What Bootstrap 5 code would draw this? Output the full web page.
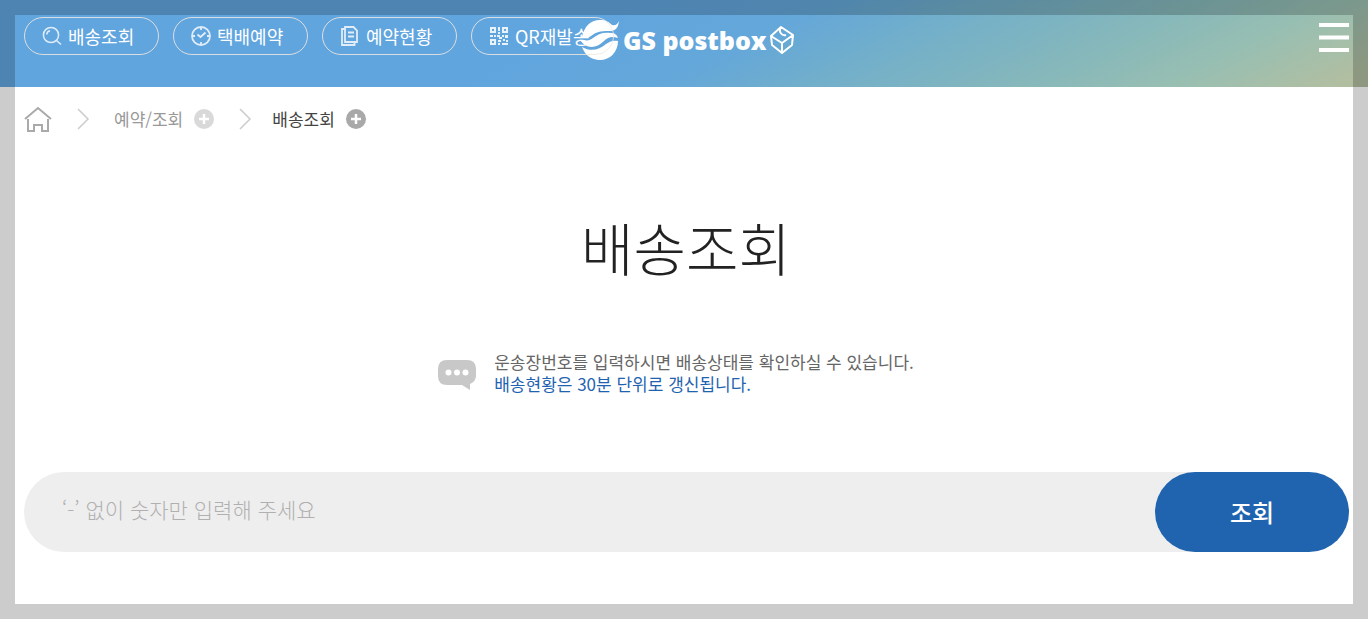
<!DOCTYPE html>
<html lang="ko">
<head>
<meta charset="utf-8">
<meta name="viewport" content="width=device-width, initial-scale=1">
<title>배송조회 - GS postbox</title>
<link href="https://cdn.jsdelivr.net/npm/bootstrap@5.3.0/dist/css/bootstrap.min.css" rel="stylesheet">
<style>
  body { font-family: "Noto Sans CJK KR", sans-serif; color: #222; background: #fff; }
  a { color: inherit; text-decoration: none; }
  .page-frame { border: 15px solid rgba(0, 0, 0, .2); pointer-events: none; z-index: 1050; }
  .site-header {
    padding: 17px 19px 32px 24px;
    background: linear-gradient(153deg, #61a5df 0%, #61a5df 40%, #64a7d9 54%, #72afca 64%, #87b8ba 78%, #9abfb1 88%, #b2bea0 98%);
  }
  .quick-menu { gap: 14px; z-index: 1; }
  .quick-link {
    height: 38px; min-width: 135px; padding: 0 17px; gap: 6px;
    border: 1px solid rgba(240, 232, 225, .85); border-radius: 19px;
    color: #fff; font-size: 18px; line-height: 36px; white-space: nowrap;
  }
  .quick-link-wide { min-width: 143px; }
  .brand { top: 19px; left: calc(50% - 104px); gap: 3px; color: #fff; }
  .brand-name { font-family: "Open Sans", sans-serif; font-weight: 800; font-size: 25px; line-height: 40px; white-space: nowrap; }
  .menu-toggle { width: 30px; padding: 0; margin-top: 6px; }
  .crumbs { padding: 0 24px; height: 64px; color: #999; font-size: 17px; }
  .crumbs .now { color: #444; margin-left: 20px; }
  .crumbs button { line-height: 0; margin-left: 11px; }
  .page-title { margin: 55px 0 0; padding-left: 4px; font-size: 57px; font-weight: 300; line-height: 80px; }
  .notice { margin-top: 65px; padding-right: 16px; gap: 18px; font-size: 17px; line-height: 22px; color: #666; }
  .notice svg { margin-top: 4px; }
  .accent { color: #1f63b0; }
  .track-form { margin: 77px 19px 67px 24px; height: 80px; border-radius: 40px; background: #eee; }
  .track-input { min-width: 0; padding: 0 38px 4px; font-size: 21px; font-weight: 300; color: #333; outline: 0; }
  .track-input::placeholder { color: #b0b0b0; opacity: 1; }
  .track-submit { width: 194px; border-radius: 40px; background: #2064b0; color: #fff; font-size: 24px; font-weight: 500; }
</style>
</head>
<body>
<div class="page-frame position-fixed top-0 start-0 w-100 h-100"></div>

<header class="site-header position-relative d-flex align-items-start justify-content-between">
  <nav class="quick-menu position-relative d-flex" aria-label="빠른 메뉴">
    <a class="quick-link d-flex align-items-center" href="#">
      <svg width="20" height="20" viewBox="0 0 20 20" fill="none" stroke="#e0edf9" stroke-width="1.5"><circle cx="9" cy="9" r="7.6"/><path d="M14.5 14.5 19 18.5M4.7 8.5A4.5 4.5 0 0 1 8 4.7"/></svg>
      <span>배송조회</span>
    </a>
    <a class="quick-link d-flex align-items-center" href="#">
      <svg width="20" height="20" viewBox="0 0 20 20" fill="none" stroke="#e0edf9" stroke-width="1.8"><circle cx="10" cy="10" r="9"/><path d="M10 1v3M10 16v3M1 10h3M16 10h3M6.5 8.5 9.5 11 14.5 6.5"/></svg>
      <span>택배예약</span>
    </a>
    <a class="quick-link d-flex align-items-center" href="#">
      <svg width="20" height="20" viewBox="0 0 20 20" fill="none" stroke="#e0edf9" stroke-width="1.8"><path d="M5 1h8.500L17 4.500V16H5zM5 3H2v16h12.500v-3M8 6.500h6M8 10.500h6"/></svg>
      <span>예약현황</span>
    </a>
    <a class="quick-link quick-link-wide d-flex align-items-center" href="#">
      <svg width="20" height="20" viewBox="0 0 20 20" fill="#e8f2fb"><path fill-rule="evenodd" d="M1 1h6v6H1zM3 3v2h2V3zM13 1h6v6h-6zM15 3v2h2V3zM1 13h6v6H1zM3 15v2h2v-2z"/><path d="M9 1h2v4H9zM9 6h2v2H9zM1 9h3v2H1zM5 9h2v2H5zM8 9h3v2h2v2h-3v-2H8zM13 9h2v2h-2zM16 9h3v3h-3zM9 14h3v2H9zM14 13h2v2h-2zM17 14h2v2h-2zM9 17h2v2H9zM13 17h6v2h-6z"/></svg>
      <span>QR재발송</span>
    </a>
  </nav>

  <a class="brand position-absolute d-flex align-items-center" href="#" aria-label="GS postbox">
    <svg width="40" height="42" viewBox="0 0 40 42" fill="#fff"><path d="M2 18C4 8 10 1 20 1c6 0 9 2 12 5 3 1 5 0 7-4-1 8-4 10-10 10-9 0-13 1-18 5-3 2-6 2-9 1z"/><path d="M0 21c5 1 9 1 13-2 6-5 11-6 18-5 4 0 6 2 7 5-6-2-10-1-14 3-8 8-18 8-24-1z"/><path d="M2 28c9 5 17 3 24-3 4-3 8-4 12-3 0 11-8 19-18 19-9 0-15-5-18-13z"/></svg>
    <span class="brand-name">GS postbox</span>
    <svg width="24" height="28" viewBox="0 0 24 28" fill="none" stroke="#fff" stroke-width="2" stroke-linejoin="round"><path d="M11 1 1 10l1 9 10 8 10-8 1-10zM1 10l11 7 11-8M12 16v11M11 1c-3 5 1 9 5 8"/></svg>
  </a>

  <button class="menu-toggle btn border-0 rounded-0 lh-1" type="button" aria-label="전체 메뉴">
    <svg class="d-block" width="30" height="29" viewBox="0 0 30 29" fill="#fff"><path d="M0 0h30v4H0zM0 12.500h30v4H0zM0 25h30v4H0z"/></svg>
  </button>
</header>

<main>
  <nav class="crumbs d-flex align-items-center" aria-label="현재 위치">
    <a href="#" aria-label="홈"><svg class="d-block" width="28" height="26" viewBox="0 0 28 26" fill="none" stroke="#aaa" stroke-width="2"><path d="M1 13 14 2l13 11M4 13v12h6v-6h8v6h6V13"/></svg></a>
    <svg class="ms-4" width="14" height="22" viewBox="0 0 14 22" fill="none" stroke="#ccc" stroke-width="1.500"><path d="m2 1 10 10L2 21"/></svg>
    <a class="ms-4" href="#">예약/조회</a>
    <button class="btn p-0 border-0" type="button" aria-label="예약/조회 메뉴 열기"><svg width="20" height="20" viewBox="0 0 20 20"><circle cx="10" cy="10" r="10" fill="#d9d9d9"/><path d="M10 5v10M5 10h10" stroke="#fff" stroke-width="2.500"/></svg></button>
    <svg class="ms-4" width="14" height="22" viewBox="0 0 14 22" fill="none" stroke="#ccc" stroke-width="1.500"><path d="m2 1 10 10L2 21"/></svg>
    <a class="now" href="#">배송조회</a>
    <button class="btn p-0 border-0" type="button" aria-label="배송조회 메뉴 열기"><svg width="20" height="20" viewBox="0 0 20 20"><circle cx="10" cy="10" r="10" fill="#a9a9a9"/><path d="M10 5v10M5 10h10" stroke="#fff" stroke-width="2.500"/></svg></button>
  </nav>

  <h1 class="page-title text-center">배송조회</h1>

  <div class="notice d-flex justify-content-center align-items-center">
    <svg width="38" height="30" viewBox="0 0 38 30"><path d="M9 0h20q9 0 9 9v7q0 5-6 8v6l-8-5H9q-9 0-9-9V9q0-9 9-9z" fill="#c8c8c8"/><g fill="#fff"><circle cx="10.500" cy="12.500" r="3"/><circle cx="19" cy="12.500" r="3"/><circle cx="27.500" cy="12.500" r="3"/></g></svg>
    <div>
      <p class="m-0">운송장번호를 입력하시면 배송상태를 확인하실 수 있습니다.</p>
      <p class="m-0 accent">배송현황은 30분 단위로 갱신됩니다.</p>
    </div>
  </div>

  <form class="track-form d-flex">
    <input class="track-input flex-fill border-0 bg-transparent" type="text" inputmode="numeric" aria-label="운송장번호" placeholder="‘-’ 없이 숫자만 입력해 주세요">
    <button class="track-submit btn border-0" type="submit">조회</button>
  </form>
</main>
<script src="https://cdn.jsdelivr.net/npm/bootstrap@5.3.0/dist/js/bootstrap.bundle.min.js"></script>
</body>
</html>
